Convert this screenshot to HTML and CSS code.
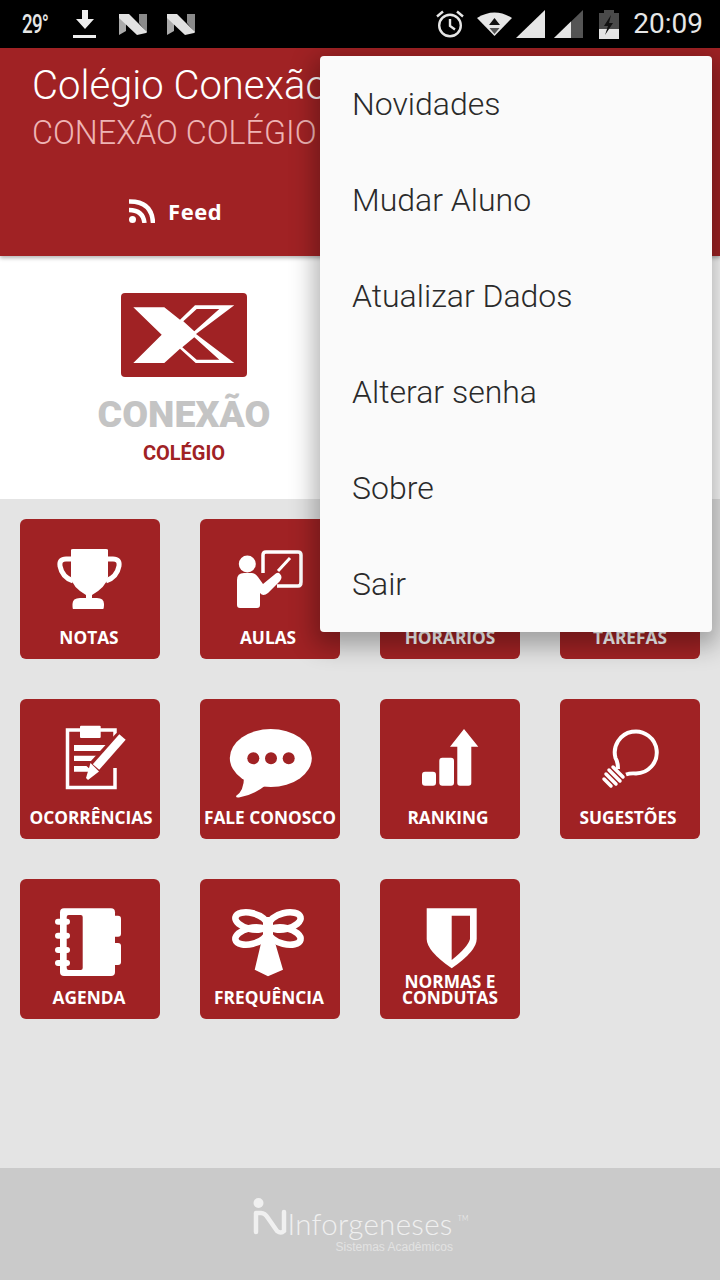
FILE: index.html
```html
<!DOCTYPE html>
<html lang="pt">
<head>
<meta charset="utf-8">
<title>Colégio Conexão</title>
<link rel="stylesheet" href="styles.css">
</head>
<body>
<div class="app">
  <div class="statusbar">
    <span class="temp">29°</span>
    <svg class="sb-dl" width="24" height="28" viewBox="0 0 24 28"><path d="M9 0h6v9h6L12 19 3 9h6z" fill="#eee"/><rect y="25" width="23" height="3" fill="#eee"/></svg>
    <svg class="sb-n1" width="28" height="23" viewBox="0 0 28 23"><path d="M0 2V22L7 18V8z" fill="#aaa"/><path d="M20 1H28V20L20 10z" fill="#8a8a8a"/><path d="M0 1H10L28 19 27 20 18 22 0 5z" fill="#e2e2e2"/></svg>
    <svg class="sb-n2" width="28" height="23" viewBox="0 0 28 23"><path d="M0 2V22L7 18V8z" fill="#aaa"/><path d="M20 1H28V20L20 10z" fill="#8a8a8a"/><path d="M0 1H10L28 19 27 20 18 22 0 5z" fill="#e2e2e2"/></svg>
    <span class="sb-fill"></span>
    <svg class="sb-alarm" width="28" height="28" viewBox="0 0 28 28" fill="none" stroke="#e6e6e6" stroke-width="2.4"><circle cx="14" cy="15.5" r="10.8"/><path d="M14 9v7l5 3.5M1 6.5 7 1.5M27 6.5 21 1.5"/></svg>
    <svg class="sb-wifi" width="35" height="24" viewBox="0 0 35 24"><path d="M0 6Q17.500-5 35 6L17.500 24z" fill="#e6e6e6"/><path d="M12 13 17.500 6 23 13z" fill="#111"/><path d="M12.500 16H22.500L17.500 22z" fill="#555"/></svg>
    <svg class="sb-sig1" width="29" height="28" viewBox="0 0 29 28"><path d="M0 28 29 0V28z" fill="#e6e6e6"/></svg>
    <svg class="sb-sig2" width="29" height="28" viewBox="0 0 29 28"><path d="M0 28 29 0V28z" fill="#555"/><path d="M0 28 17 11.500V28z" fill="#e6e6e6"/></svg>
    <svg class="sb-bat" width="20" height="29" viewBox="0 0 20 29"><path d="M5 0h10v3h5v17H0V3h5z" fill="#4a4a4a"/><path d="M0 19H20V29H0z" fill="#e6e6e6"/><path d="M12 5 5 16h4l-3 9 8-12h-4z" fill="#111"/></svg>
    <span class="time">20:09</span>
  </div>

  <header class="appbar">
    <h1 class="title">Colégio Conexão</h1>
    <p class="subtitle">CONEXÃO COLÉGIO</p>
    <div class="tabs">
      <div class="tab">
        <svg width="26" height="24" viewBox="0 0 26 24" fill="none" stroke="#fff" stroke-width="4.500"><path d="M0 2.500Q23 2 24 24"/><path d="M0 11Q14 11 15.500 24"/><circle cx="3.500" cy="20.500" r="3.500" fill="#fff" stroke="none"/></svg>
        <span>Feed</span>
      </div>
    </div>
  </header>

  <section class="banner">
    <div class="brand">
      <svg class="brand-logo" width="126" height="84" viewBox="0 0 126 84">
        <rect width="126" height="84" rx="4" fill="#a02224"/>
        <path d="M12.300 14.300H43.300L59 26.700 74 12.300H113.300L75 41 113.300 70H74.700L59 55.700 43.300 70H12.300L40.700 41.700z" fill="#fff"/>
        <path d="M62.300 28.300 75.700 16H98.300L73.300 38.300zM73.300 44.300 98.300 66.700H75.700L61.300 54.300z" fill="#a02224"/>
      </svg>
      <div class="brand-name">CONEXÃO</div>
      <div class="brand-sub">COLÉGIO</div>
    </div>
  </section>

  <main class="grid">
    <a class="tile">
      <svg class="icon" viewBox="0 20 140 80"><path d="M51 31Q51 30 53 30H86Q88 30 88 31V58Q86 68 72 76V80H66V76Q52 68 51 58z" fill="#fff"/><path d="M52 40H46Q39 40 40 47 42 58 53 62M87 40H93Q100 40 99 47 97 58 86 62" fill="none" stroke="#fff" stroke-width="5"/><path d="M53 90Q52.500 90 52.500 85 52.500 79 60 79H77Q84 79 84 85 84 90 83 90z" fill="#fff"/></svg>
      <span class="label label-l1">NOTAS</span>
    </a>
    <a class="tile">
      <svg class="icon" viewBox="0 20 140 80"><circle cx="47.300" cy="45" r="8.500" fill="#fff"/><path d="M37 61Q37 54 44 54H52Q55 54 58 58L63 65 74 56Q78 52 80 55 83 58 80 62L68 74Q63 78 60 74V86Q60 89 57 89H40Q37 89 37 86z" fill="#fff"/><path d="M63 54V36Q63 33 66 33H98Q101 33 101 36V63Q101 67 98 67H77" fill="none" stroke="#fff" stroke-width="3.500"/><path d="M78 52 90 39" stroke="#fff" stroke-width="3"/></svg>
      <span class="label label-l2">AULAS</span>
    </a>
    <a class="tile">
      <svg class="icon" viewBox="0 20 140 80"><circle cx="70" cy="60" r="26" fill="none" stroke="#fff" stroke-width="5"/></svg>
      <span class="label">HORÁRIOS</span>
    </a>
    <a class="tile">
      <svg class="icon" viewBox="0 20 140 80"><rect x="48" y="32" width="44" height="56" fill="none" stroke="#fff" stroke-width="5"/></svg>
      <span class="label">TAREFAS</span>
    </a>
    <a class="tile">
      <svg class="icon" viewBox="0 20 140 80"><path d="M95 53V31H47.500V88.500H95V69" fill="none" stroke="#fff" stroke-width="3.500"/><rect x="60" y="26.700" width="20.700" height="12.300" rx="1" fill="#fff"/><path d="M54 46H86.700V52H54zM54 56.700H83V62H54zM54 67H73V72.700H54z" fill="#fff"/><path d="M102 39 72 72" stroke="#a02224" stroke-width="15"/><path d="M102.500 38 76 68" stroke="#fff" stroke-width="8.500"/><path d="M70.500 64 79 72.500 68 81 66 79z" fill="#fff"/></svg>
      <span class="label label-r1">OCORRÊNCIAS</span>
    </a>
    <a class="tile">
      <svg class="icon" viewBox="0 20 140 80"><ellipse cx="70.800" cy="59" rx="41" ry="29" fill="#fff"/><path d="M44 78Q44 92 36 97 36 99 39 98.500 54 96 66 86z" fill="#fff"/><g fill="#a02224"><circle cx="53.300" cy="59.300" r="6"/><circle cx="71" cy="59.300" r="6"/><circle cx="88.700" cy="59.300" r="6"/></g></svg>
      <span class="label">FALE CONOSCO</span>
    </a>
    <a class="tile">
      <svg class="icon" viewBox="0 20 140 80"><rect x="42" y="72.700" width="14" height="14" rx="3" fill="#fff"/><rect x="59.300" y="58.700" width="14.700" height="28" rx="3" fill="#fff"/><path d="M84 30 98.300 47.700H91.300V84Q91.300 86.700 88.500 86.700H80Q77.300 86.700 77.300 84V47.700H70z" fill="#fff"/></svg>
      <span class="label label-l2">RANKING</span>
    </a>
    <a class="tile">
      <svg class="icon" viewBox="0 20 140 80"><path d="M58 70Q58 63 55.500 59A21 21 0 1 1 76 74.500Q70 74 66 75.500" fill="none" stroke="#fff" stroke-width="4"/><path d="M53 68 63 78M49 71 60 82M46 75 56 85M44 80 51 87" stroke="#fff" stroke-width="3.500" stroke-linecap="round"/></svg>
      <span class="label label-l2">SUGESTÕES</span>
    </a>
    <a class="tile">
      <svg class="icon" viewBox="0 20 140 80"><rect x="40" y="29.300" width="55" height="67.700" rx="4" fill="#fff"/><rect x="90" y="36.700" width="11" height="21" rx="3" fill="#fff"/><rect x="90" y="64" width="11" height="22" rx="3" fill="#fff"/><rect x="46.700" y="36" width="16" height="55" rx="2" fill="#a02224"/><g fill="#fff"><rect x="35" y="39.700" width="15" height="6" rx="3"/><rect x="35" y="53.700" width="15" height="6" rx="3"/><rect x="35" y="68" width="15" height="6" rx="3"/><rect x="35" y="81" width="15" height="6" rx="3"/></g></svg>
      <span class="label label-l1">AGENDA</span>
    </a>
    <a class="tile">
      <svg class="icon" viewBox="0 20 140 80"><g fill="none" stroke="#fff" stroke-width="6.500"><ellipse cx="51" cy="42" rx="16" ry="8" transform="rotate(14 51 42)"/><ellipse cx="51" cy="57" rx="16" ry="8" transform="rotate(-14 51 57)"/><ellipse cx="85" cy="42" rx="16" ry="8" transform="rotate(-14 85 42)"/><ellipse cx="85" cy="57" rx="16" ry="8" transform="rotate(14 85 57)"/></g><path d="M63 38H73V60H74L83 90.700 68 97.300 54.700 90.700 62 60H63z" fill="#fff"/></svg>
      <span class="label label-l1">FREQUÊNCIA</span>
    </a>
    <a class="tile">
      <svg class="icon" viewBox="0 20 140 80"><path d="M46.700 29.300H96.700V60Q96.700 72 71.700 89.300 46.700 72 46.700 60z" fill="#fff"/><path d="M71.700 36.700H90V60Q88 68 71.700 81z" fill="#a02224"/></svg>
      <span class="label">NORMAS E<br>CONDUTAS</span>
    </a>
  </main>

  <footer class="footer">
    <svg class="foot-mark" width="34" height="40" viewBox="0 0 34 40" fill="none" stroke="#f0f0f0" stroke-width="4.500"><circle cx="5.500" cy="5" r="5" fill="#f0f0f0" stroke="none"/><path d="M3 15V34M3 15H8Q12 15 15 20L24 33Q28 36 31 33V14" stroke-linecap="round"/></svg>
    <div class="foot-text">
      <div class="foot-name">Inforgeneses<sup class="foot-tm">TM</sup></div>
      <div class="foot-sub">Sistemas Acadêmicos</div>
    </div>
  </footer>

  <nav class="menu">
    <div class="menu-item">Novidades</div>
    <div class="menu-item">Mudar Aluno</div>
    <div class="menu-item">Atualizar Dados</div>
    <div class="menu-item">Alterar senha</div>
    <div class="menu-item">Sobre</div>
    <div class="menu-item">Sair</div>
  </nav>
</div>
</body>
</html>
```
FILE: styles.css
```css
* { box-sizing: border-box; }
html, body { margin: 0; padding: 0; }
body { width: 720px; height: 1280px; overflow: hidden; background: #e4e4e4; font-family: Roboto, sans-serif; }
.app { position: relative; width: 720px; height: 1280px; display: flex; flex-direction: column; overflow: hidden; }

.statusbar { height: 48px; flex: none; background: #000; display: flex; align-items: center; padding: 0 17px 0 22px; color: #e6e6e6; }
.temp { width: 28px; font: 500 25px/1 Roboto, sans-serif; letter-spacing: -1px; display: inline-block; transform: scaleX(.75); transform-origin: left center; }
.sb-dl { margin-left: 23px; }
.sb-n1 { margin-left: 22px; }
.sb-n2 { margin-left: 20px; }
.sb-fill { flex: 1; }
.sb-wifi { margin-left: 13px; }
.sb-sig1 { margin-left: 4px; }
.sb-sig2 { margin-left: 9px; }
.sb-bat { margin-left: 16px; }
.time { margin-left: 14px; font: 400 28px/1 Roboto, sans-serif; }

.appbar { height: 208px; flex: none; background: #a02224; color: #fff; padding: 16px 0 0 32px; box-shadow: 0 2px 4px rgba(0,0,0,.3); position: relative; }
.title { margin: 0; font: 300 40px/44px Roboto, sans-serif; white-space: nowrap; }
.subtitle { margin: 6px 0 0; font: 300 32.300px/38px Roboto, sans-serif; color: #eeb4b4; }
.tabs { margin: 44px 0 0 97px; }
.tab { display: flex; align-items: center; gap: 13px; }
.tab span { font: 700 22px/30px "Open Sans", sans-serif; letter-spacing: .6px; }

.banner { height: 243px; flex: none; background: #fff; }
.brand { width: 368px; display: flex; flex-direction: column; align-items: center; padding-top: 37px; }
.brand-logo { display: block; }
.brand-name { margin-top: 14px; font: 900 37.500px/46px Roboto, sans-serif; color: #c4c4c4; }
.brand-sub { margin-top: 4px; font: 700 20px/24px Roboto, sans-serif; color: #a02224; }

.grid { flex: 1; display: grid; grid-template-columns: repeat(4, 140px); grid-auto-rows: 140px; gap: 40px; padding: 20px; align-content: start; }
.tile { background: #a02224; border-radius: 6px; display: flex; flex-direction: column; align-items: center; padding: 20px 0 13px; color: #fff; }
.icon { display: block; width: 140px; height: 80px; flex: none; margin-bottom: -8px; overflow: visible; }
.label { margin-top: auto; text-align: center; font: 700 17.300px/16px "Open Sans", sans-serif; white-space: nowrap; }
.label-l1 { transform: translateX(-1px); }
.label-l2 { transform: translateX(-2px); }
.label-r1 { transform: translateX(1px); }

.footer { height: 112px; flex: none; background: #cacaca; display: flex; justify-content: center; padding: 30px 0 0 0; color: #f0f0f0; }
.foot-mark { margin: 0 1px 0 -2px; }
.foot-text { width: 178px; }
.foot-name { font: 300 29.500px/32px Lato, sans-serif; letter-spacing: .3px; margin-top: 10px; white-space: nowrap; }
.foot-tm { font-size: 7px; vertical-align: 14px; line-height: 0; margin-left: 5px; }
.foot-sub { margin: 0 0 0 48px; font: 400 12px/14px "Liberation Sans", sans-serif; color: #e2e2e2; white-space: nowrap; }

.menu { position: absolute; left: 320px; top: 56px; width: 392px; height: 576px; background: #fafafa; border-radius: 4px; box-shadow: 0 8px 24px 6px rgba(0,0,0,.3); color: #2a2a2a; }
.menu-item { height: 96px; padding-left: 32px; font: 300 32px/97px Roboto, sans-serif; }
```
